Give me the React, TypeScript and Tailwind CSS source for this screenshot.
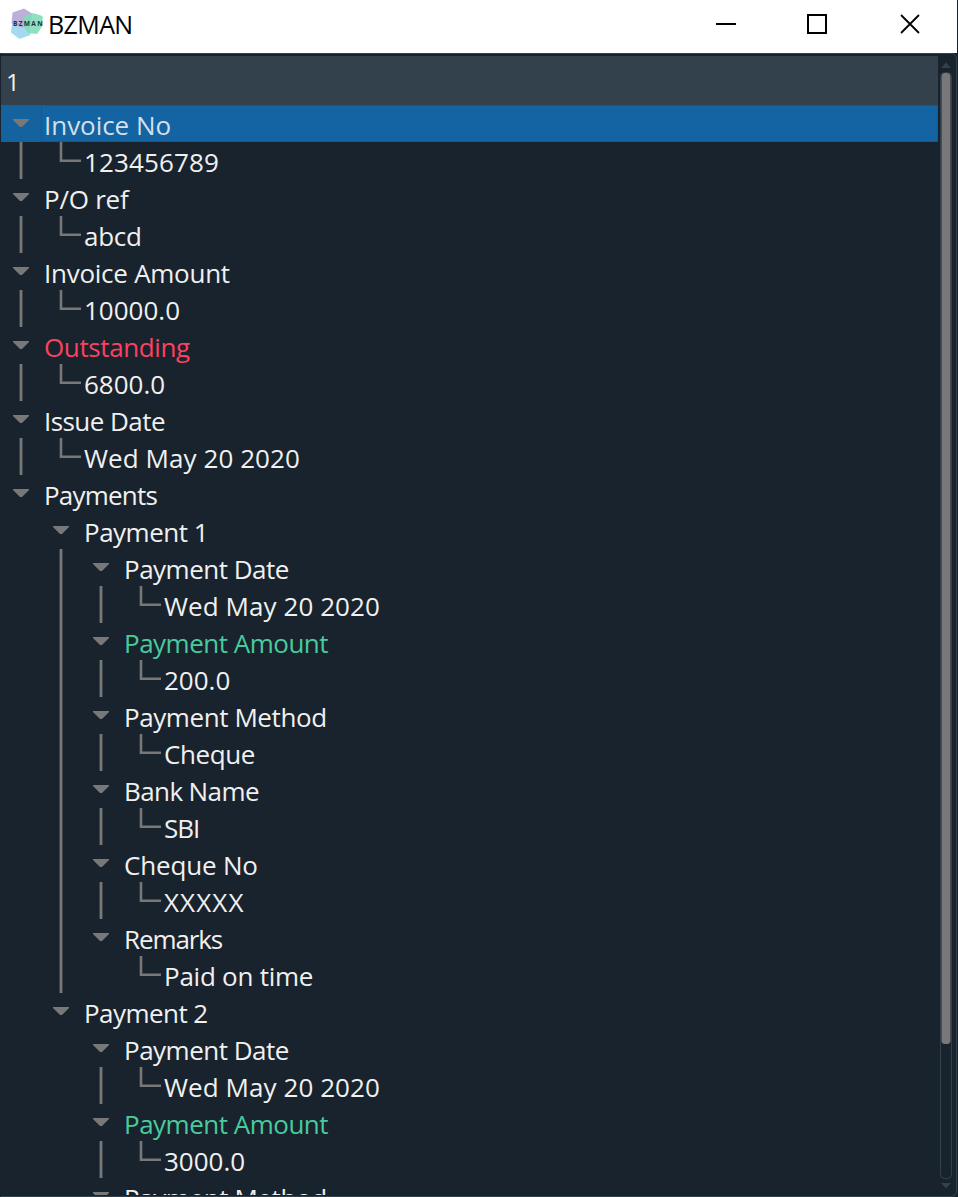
type Cell = "blank" | "line" | "elbow" | "arrow";
type Tone = "normal" | "red" | "green" | "selected";
interface Row {
  cells: Cell[];
  text: string;
  tracking: string;
  tone?: Tone;
}

const TONES: Record<Tone, string> = {
  normal: "text-[#f0f0f0]",
  red: "text-[#fc4160]",
  green: "text-[#48cb9c]",
  selected: "text-[#d3dfe9]",
};

const ROWS: Row[] = [
  { cells: ["arrow"], text: "Invoice No", tracking: "tracking-[-0.04px]", tone: "selected" },
  { cells: ["line", "elbow"], text: "123456789", tracking: "tracking-[0.12px]" },
  { cells: ["arrow"], text: "P/O ref", tracking: "tracking-[-0.25px]" },
  { cells: ["line", "elbow"], text: "abcd", tracking: "tracking-[-0.25px]" },
  { cells: ["arrow"], text: "Invoice Amount", tracking: "tracking-[-0.26px]" },
  { cells: ["line", "elbow"], text: "10000.0", tracking: "tracking-normal" },
  { cells: ["arrow"], text: "Outstanding", tracking: "tracking-[-0.38px]", tone: "red" },
  { cells: ["line", "elbow"], text: "6800.0", tracking: "tracking-normal" },
  { cells: ["arrow"], text: "Issue Date", tracking: "tracking-[-0.56px]" },
  { cells: ["line", "elbow"], text: "Wed May 20 2020", tracking: "tracking-[0.07px]" },
  { cells: ["arrow"], text: "Payments", tracking: "tracking-[-0.8px]" },
  { cells: ["blank", "arrow"], text: "Payment 1", tracking: "tracking-[-0.5px]" },
  { cells: ["blank", "line", "arrow"], text: "Payment Date", tracking: "tracking-[-0.5px]" },
  { cells: ["blank", "line", "line", "elbow"], text: "Wed May 20 2020", tracking: "tracking-[0.07px]" },
  { cells: ["blank", "line", "arrow"], text: "Payment Amount", tracking: "tracking-[-0.5px]", tone: "green" },
  { cells: ["blank", "line", "line", "elbow"], text: "200.0", tracking: "tracking-normal" },
  { cells: ["blank", "line", "arrow"], text: "Payment Method", tracking: "tracking-[-0.42px]" },
  { cells: ["blank", "line", "line", "elbow"], text: "Cheque", tracking: "tracking-[-0.4px]" },
  { cells: ["blank", "line", "arrow"], text: "Bank Name", tracking: "tracking-[-0.6px]" },
  { cells: ["blank", "line", "line", "elbow"], text: "SBI", tracking: "tracking-[-1px]" },
  { cells: ["blank", "line", "arrow"], text: "Cheque No", tracking: "tracking-[-0.17px]" },
  { cells: ["blank", "line", "line", "elbow"], text: "XXXXX", tracking: "tracking-[1.1px]" },
  { cells: ["blank", "line", "arrow"], text: "Remarks", tracking: "tracking-[-1.1px]" },
  { cells: ["blank", "line", "blank", "elbow"], text: "Paid on time", tracking: "tracking-[-0.25px]" },
  { cells: ["blank", "arrow"], text: "Payment 2", tracking: "tracking-[-0.55px]" },
  { cells: ["blank", "blank", "arrow"], text: "Payment Date", tracking: "tracking-[-0.5px]" },
  { cells: ["blank", "blank", "line", "elbow"], text: "Wed May 20 2020", tracking: "tracking-[0.07px]" },
  { cells: ["blank", "blank", "arrow"], text: "Payment Amount", tracking: "tracking-[-0.5px]", tone: "green" },
  { cells: ["blank", "blank", "line", "elbow"], text: "3000.0", tracking: "tracking-normal" },
  { cells: ["blank", "blank", "arrow"], text: "Payment Method", tracking: "tracking-[-0.42px]" },
];

function Branch({ kind }: { kind: Cell }) {
  return (
    <svg width="40" height="37" viewBox="0 0 40 37" className="block shrink-0">
      {kind === "line" && <path d="M20 0V37" stroke="#787878" strokeWidth="2.8" />}
      {kind === "elbow" && <path d="M20 0V18.7H40" fill="none" stroke="#787878" strokeWidth="2.6" />}
      {kind === "arrow" && <path d="M12 14H28V15L21 22H19L12 15Z" fill="#787878" />}
    </svg>
  );
}

function TreeRow({ row }: { row: Row }) {
  const selected = row.tone === "selected";
  return (
    <div className={`flex h-[37px] shrink-0 ${selected ? "bg-[#14639f]" : ""}`}>
      {row.cells.map((kind, i) => (
        <Branch key={i} kind={kind} />
      ))}
      <div className={`flex-1 ${selected ? "border border-[#125a92] bg-[#1464a3] pl-[2px]" : "pl-[3px]"}`}>
        <span
          className={`block whitespace-pre text-[26px] leading-[41px] ${selected ? "-mt-px" : ""} ${row.tracking} ${TONES[row.tone ?? "normal"]}`}
        >
          {row.text}
        </span>
      </div>
    </div>
  );
}

function Logo() {
  return (
    <svg width="34" height="34" viewBox="0 0 34 34" className="shrink-0">
      <path d="M2 15L12 13L20 19L20.5 27L9.5 31L1 24.5Z" fill="#a5d9ef" />
      <path d="M2.5 4.5L14 0.5L22 5.5L21 15L12 20L1.5 15.5Z" fill="#bdb0d8" />
      <path d="M14.5 8L23 5L32.5 8L33 17L27 26L18 25L13 17Z" fill="#7fdcb8" fillOpacity="0.88" />
      <text x="3" y="18.2" fontSize="6.6" fontWeight="700" textLength="29.5" fill="#203040" fontFamily="Open Sans, sans-serif">
        BZMAN
      </text>
    </svg>
  );
}

export default function App() {
  return (
    <div className="flex h-[1197px] w-[958px] flex-col overflow-hidden bg-[#19232d] font-['Open_Sans','Noto_Sans',sans-serif]">
      <header className="mr-px flex h-[53px] shrink-0 items-start bg-white">
        <div className="flex pl-[10px] pt-[8px]">
          <Logo />
        </div>
        <h1 className="pl-[4px] text-[25px] leading-[48px] tracking-[-0.6px] text-black">BZMAN</h1>
        <svg width="250" height="53" viewBox="-20 0 250 53" className="ml-auto shrink-0" fill="none" stroke="#000">
          <path d="M-11 24H9" strokeWidth="2" />
          <rect x="81" y="15" width="18" height="18" strokeWidth="2" />
          <path d="M174 15L192 33M192 15L174 33" strokeWidth="1.8" />
        </svg>
      </header>
      <main className="mr-px flex min-h-0 flex-1 rounded-r-md border border-[#32414b] border-l-[#19232d] pb-px pt-[2px]">
        <section className="flex min-w-0 flex-1 flex-col overflow-hidden">
          <div className="h-[49px] shrink-0 bg-[#32414b] pl-[5px] text-[24px] leading-[52px] text-[#f0f0f0]">1</div>
          {ROWS.map((row, i) => (
            <TreeRow key={i} row={row} />
          ))}
        </section>
        <svg width="18" height="1139" viewBox="938 56 18 1139" className="shrink-0">
          <path d="M941 68L946 62.5L951 68Z" fill="#32414b" />
          <rect x="940.5" y="72.5" width="11" height="1106" rx="4" fill="#19232d" stroke="#32414b" />
          <rect x="941.5" y="73" width="9" height="971" rx="3.5" fill="#787878" />
          <path d="M941 1183H951L946 1188.5Z" fill="#32414b" />
        </svg>
      </main>
    </div>
  );
}
